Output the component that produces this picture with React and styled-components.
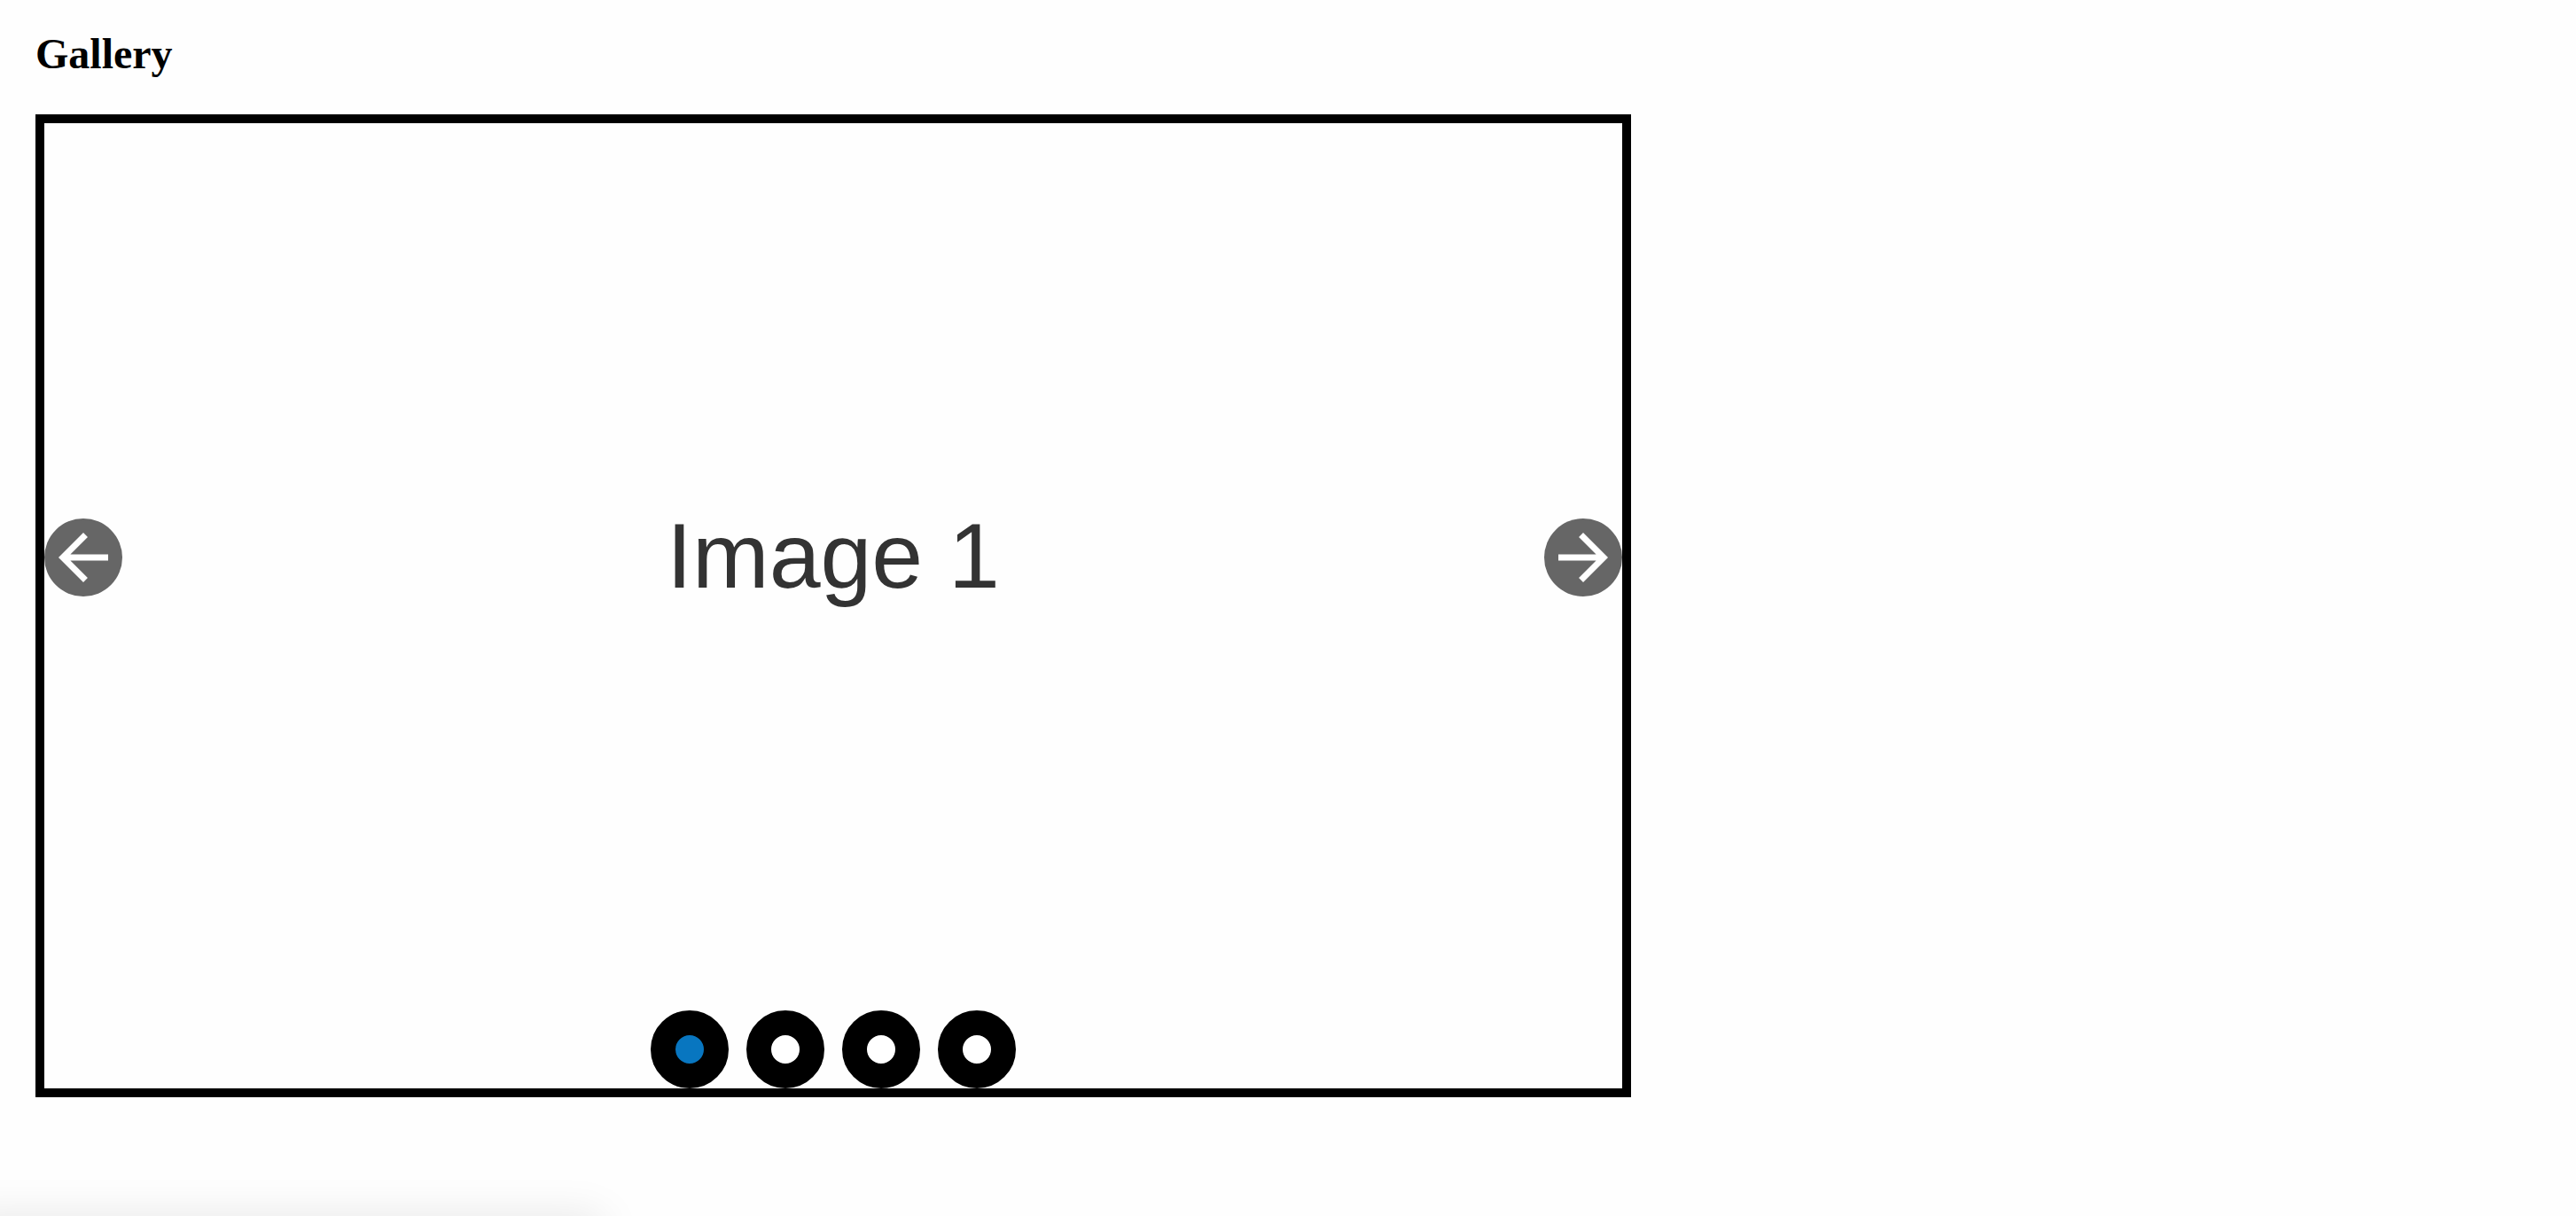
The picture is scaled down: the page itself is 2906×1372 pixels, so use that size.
import React, { useState } from "react";
import styled, { createGlobalStyle } from "styled-components";

const GlobalStyle = createGlobalStyle`
  *, *::before, *::after {
    box-sizing: border-box;
  }

  body {
    margin: 0;
    background: #fefefe;
    color: #000;
    font-family: "Liberation Serif", "Times New Roman", serif;
  }
`;

const Page = styled.main`
  min-height: 100vh;
  padding: 32px 40px;
  overflow: hidden;
`;

const Title = styled.h1`
  margin: 0 0 40px;
  font-size: 48px;
  font-weight: 700;
  line-height: 57px;
`;

const Carousel = styled.section`
  display: flex;
  flex-direction: column;
  gap: 21px;
  max-width: 1800px;
  border: 10px solid #000;
`;

const Stage = styled.div`
  display: flex;
  align-items: center;
  justify-content: space-between;
  aspect-ratio: 1780 / 980;
`;

const Caption = styled.p`
  margin: 0;
  padding-bottom: 4px;
  color: #333;
  font-family: "Liberation Sans", Arial, sans-serif;
  font-size: 104px;
  line-height: 120px;
`;

const ArrowButton = styled.button`
  display: flex;
  flex: none;
  padding: 2px;
  border: 0;
  border-radius: 50%;
  background: #666;
  color: #fff;
  cursor: pointer;
`;

const ArrowIcon = styled.svg`
  width: 84px;
  height: 84px;
  fill: currentColor;
`;

const Dots = styled.div`
  display: flex;
  justify-content: center;
  gap: 20px;
`;

const Dot = styled.button`
  width: 88px;
  height: 88px;
  padding: 0;
  border: 28px solid #000;
  border-radius: 50%;
  background: ${({ $active }) => ($active ? "#0876c0" : "#fff")};
  cursor: pointer;
`;

const BottomShade = styled.div`
  position: fixed;
  top: 100%;
  left: -40px;
  width: 720px;
  height: 40px;
  border-radius: 8px;
  box-shadow: 0 0 48px rgba(0, 0, 0, 0.1);
`;

const slides = ["Image 1", "Image 2", "Image 3", "Image 4"];

export default function App() {
  const [current, setCurrent] = useState(0);
  const move = (step) =>
    setCurrent((index) => (index + step + slides.length) % slides.length);

  return (
    <>
      <GlobalStyle />
      <Page>
        <Title>Gallery</Title>
        <Carousel aria-label="Gallery">
          <Stage>
            <ArrowButton type="button" aria-label="Previous" onClick={() => move(-1)}>
              <ArrowIcon viewBox="0 0 24 24" aria-hidden="true">
                <path d="M20 11H7.83l5.59-5.59L12 4l-8 8 8 8 1.41-1.41L7.83 13H20v-2z" />
              </ArrowIcon>
            </ArrowButton>
            <Caption>{slides[current]}</Caption>
            <ArrowButton type="button" aria-label="Next" onClick={() => move(1)}>
              <ArrowIcon viewBox="0 0 24 24" aria-hidden="true">
                <path d="M12 4l-1.41 1.41L16.17 11H4v2h12.17l-5.58 5.59L12 20l8-8z" />
              </ArrowIcon>
            </ArrowButton>
          </Stage>
          <Dots>
            {slides.map((slide, index) => (
              <Dot
                key={slide}
                type="button"
                aria-label={slide}
                aria-current={index === current}
                $active={index === current}
                onClick={() => setCurrent(index)}
              />
            ))}
          </Dots>
        </Carousel>
      </Page>
      <BottomShade />
    </>
  );
}
